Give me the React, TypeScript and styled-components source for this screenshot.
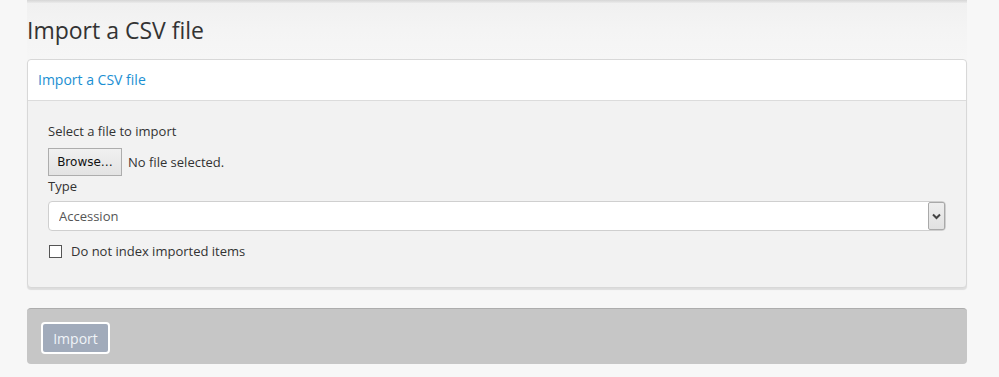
import React from "react";
import styled, { createGlobalStyle } from "styled-components";

const Global = createGlobalStyle`
  html, body { margin: 0; padding: 0; background: #f7f7f7; }
  body { font-family: "Open Sans", "DejaVu Sans", sans-serif; color: #333; font-size: 13px; }
  * { box-sizing: border-box; }
`;

const Page = styled.div`
  width: 940px;
  margin-left: 27px;
  position: relative;
  background: linear-gradient(to bottom, #f0f0f0 0px, #f4f4f4 30px, #f7f7f7 70px);
`;

const TopShade = styled.div`
  height: 3px;
  background: linear-gradient(to bottom, #d6d6d6, #ebebeb);
`;

const Title = styled.h1`
  margin: 14px 0 16px 0;
  font-size: 23px;
  line-height: 26px;
  font-weight: 400;
  color: #333;
`;

const Panel = styled.section`
  background: #f2f2f2;
  border: 1px solid #d8d8d8;
  border-radius: 4px;
  box-shadow: 0 2px 1px rgba(0, 0, 0, 0.1);
`;

const PanelHeader = styled.div`
  background: #fff;
  border-bottom: 1px solid #dcdcdc;
  border-radius: 4px 4px 0 0;
  padding: 10px 10px;
  line-height: 20px;
  font-size: 14px;
  color: #1b8fd2;
`;

const PanelBody = styled.div`
  padding: 20px 20px 26px 20px;
`;

const Label = styled.div`
  line-height: 20px;
  font-size: 13px;
  color: #333;
`;

const FileRow = styled.div`
  display: flex;
  align-items: center;
  gap: 6px;
  margin-top: 7px;
`;

const BrowseButton = styled.button`
  width: 74px;
  height: 28px;
  padding: 0;
  border: 1px solid #adadad;
  background: linear-gradient(to bottom, #f0f0f0, #e3e3e3);
  font-family: "DejaVu Sans", "Liberation Sans", sans-serif;
  font-size: 12px;
  color: #111;
`;

const FileName = styled.span`
  font-size: 13px;
  color: #333;
`;

const SelectWrap = styled.div`
  position: relative;
  margin-top: 5px;
  height: 30px;
`;

const Select = styled.select`
  appearance: none;
  -webkit-appearance: none;
  width: 100%;
  height: 30px;
  border: 1px solid #cfcfcf;
  border-radius: 4px;
  background: #fff;
  padding: 0 10px;
  font-family: "Open Sans", sans-serif;
  font-size: 13px;
  color: #555;
  outline: none;
`;

const ArrowBox = styled.div`
  position: absolute;
  right: 1px;
  top: 1px;
  width: 17px;
  height: 28px;
  background: linear-gradient(to bottom, #eeeeee, #e1e1e1);
  border: 1px solid #a9a9a9;
  border-radius: 2px;
  display: flex;
  align-items: center;
  justify-content: center;
  pointer-events: none;
`;

const CheckRow = styled.label`
  display: flex;
  align-items: center;
  gap: 9px;
  margin-top: 10px;
  line-height: 20px;
  font-size: 13px;
  color: #333;
`;

const CheckBox = styled.span`
  width: 13px;
  height: 13px;
  margin-left: 1px;
  border: 1px solid #555;
  background: #fff;
  display: inline-block;
`;

const Actions = styled.div`
  margin-top: 20px;
  height: 56px;
  background: #c6c6c6;
  border-top: 1px solid #adadad;
  border-radius: 4px;
  padding: 13px 14px;
  display: flex;
  align-items: flex-start;
`;

const ImportButton = styled.button`
  height: 32px;
  width: 69px;
  border: 2px solid #fff;
  border-radius: 4px;
  background: #a1abbb;
  color: #f0f4f8;
  font-family: "Open Sans", sans-serif;
  font-size: 14px;
  padding: 0;
`;

export default function App() {
  return (
    <>
      <Global />
      <Page>
        <TopShade />
        <Title>Import a CSV file</Title>
        <Panel>
          <PanelHeader>Import a CSV file</PanelHeader>
          <PanelBody>
            <Label>Select a file to import</Label>
            <FileRow>
              <BrowseButton type="button">Browse…</BrowseButton>
              <FileName>No file selected.</FileName>
            </FileRow>
            <Label>Type</Label>
            <SelectWrap>
              <Select defaultValue="Accession">
                <option>Accession</option>
              </Select>
              <ArrowBox>
                <svg width="9" height="7" viewBox="0 0 9 7">
                  <path d="M1 1.5 L4.5 5 L8 1.5" stroke="#444" strokeWidth="2" fill="none" />
                </svg>
              </ArrowBox>
            </SelectWrap>
            <CheckRow>
              <CheckBox />
              Do not index imported items
            </CheckRow>
          </PanelBody>
        </Panel>
        <Actions>
          <ImportButton type="button">Import</ImportButton>
        </Actions>
      </Page>
    </>
  );
}
